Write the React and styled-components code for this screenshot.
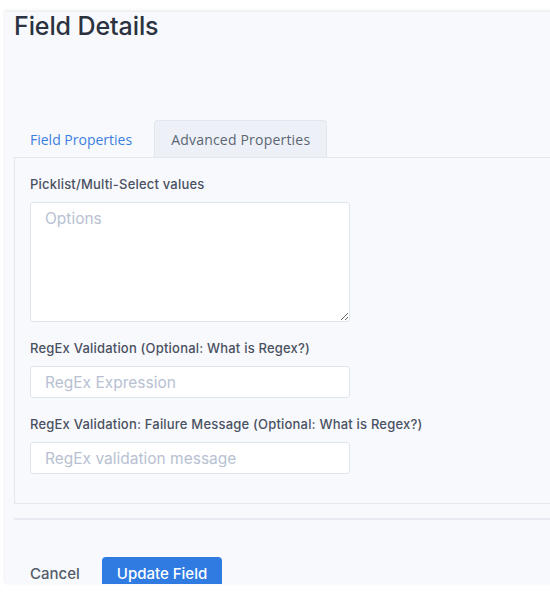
import React from "react";
import styled, { createGlobalStyle } from "styled-components";

const Global = createGlobalStyle`
  html, body {
    margin: 0;
    padding: 0;
    background: #ffffff;
    overflow: hidden;
  }
  * {
    box-sizing: border-box;
  }
`;

const Page = styled.div`
  padding: 12px 0 12px 5px;
  height: 596px;
`;

// Panel is clipped at its bottom edge, which cuts the Update button in half
const Panel = styled.div`
  position: relative;
  height: 572px;
  overflow: hidden;
  background: #f8f9fc;
  box-shadow: 0 -1px 3px rgba(30, 40, 60, 0.12);
  padding: 0 0 0 9px;
  width: 560px;
  font-family: Inter, "Liberation Sans", sans-serif;
`;

const Title = styled.h1`
  margin: 0;
  font-size: 25px;
  line-height: 28px;
  font-weight: 500;
  color: #2b3240;
  letter-spacing: -0.1px;
`;

const Tabs = styled.div`
  display: flex;
  align-items: flex-end;
  margin-top: 80px;
`;

const Tab = styled.div`
  height: 37px;
  display: flex;
  align-items: center;
  padding: 0 ${(p) => (p.$active ? "16px" : "15px")};
  margin-right: 6px;
  font-family: "Open Sans", "Noto Sans", sans-serif;
  font-size: 14px;
  letter-spacing: ${(p) => (p.$active ? "0.2px" : "0")};
  color: ${(p) => (p.$active ? "#5b6573" : "#3d7fe0")};
  background: ${(p) => (p.$active ? "#edf1f7" : "transparent")};
  border: 1px solid ${(p) => (p.$active ? "#e1e7ef" : "transparent")};
  border-bottom: none;
  border-radius: 4px 4px 0 0;
`;

const Box = styled.div`
  border: 1px solid #e2e7f0;
  border-right: none;
  padding: 18px 16px 29px 15px;
  display: flex;
  flex-direction: column;
`;

const Label = styled.label`
  font-size: 13px;
  font-weight: 500;
  letter-spacing: 0.2px;
  color: #4a5162;
  line-height: 16px;
  margin-bottom: 10px;
  & + textarea,
  & + input {
    margin-bottom: 18px;
  }
`;

const fieldStyle = `
  width: 320px;
  background: #ffffff;
  border: 1px solid #dfe5ef;
  border-radius: 3px;
  padding: 0 14px;
  font-family: Inter, "Liberation Sans", sans-serif;
  font-size: 15.5px;
  color: #333a48;
  outline: none;
  &::placeholder {
    color: #b7c1d2;
  }
`;

const TextArea = styled.textarea`
  ${fieldStyle}
  height: 120px;
  padding-top: 6px;
  resize: vertical;
`;

const Input = styled.input`
  ${fieldStyle}
  height: 32px;
  &:last-child {
    margin-bottom: 0;
  }
`;

const Divider = styled.hr`
  margin: 14px 0 0 0;
  border: none;
  border-top: 2px solid #e7eaf0;
`;

const Actions = styled.div`
  display: flex;
  align-items: flex-start;
  margin-top: 37px;
  padding-left: 16px;
`;

const CancelButton = styled.button`
  background: none;
  border: none;
  height: 33px;
  padding: 0;
  font-family: Inter, "Liberation Sans", sans-serif;
  font-size: 15px;
  font-weight: 500;
  color: #535b6a;
  margin-right: 22px;
  cursor: pointer;
`;

const PrimaryButton = styled.button`
  height: 33px;
  padding: 0 15px;
  border: none;
  border-radius: 4px;
  background: #2f7be2;
  color: #ffffff;
  font-family: Inter, "Liberation Sans", sans-serif;
  font-size: 15px;
  font-weight: 500;
  cursor: pointer;
`;

export default function App() {
  return (
    <Page>
      <Global />
      <Panel>
        <Title>Field Details</Title>
        <Tabs>
          <Tab>Field Properties</Tab>
          <Tab $active>Advanced Properties</Tab>
        </Tabs>
        <Box>
          <Label>Picklist/Multi-Select values</Label>
          <TextArea placeholder="Options" />
          <Label>RegEx Validation (Optional: What is Regex?)</Label>
          <Input placeholder="RegEx Expression" />
          <Label>RegEx Validation: Failure Message (Optional: What is Regex?)</Label>
          <Input placeholder="RegEx validation message" />
        </Box>
        <Divider />
        <Actions>
          <CancelButton>Cancel</CancelButton>
          <PrimaryButton>Update Field</PrimaryButton>
        </Actions>
      </Panel>
    </Page>
  );
}
